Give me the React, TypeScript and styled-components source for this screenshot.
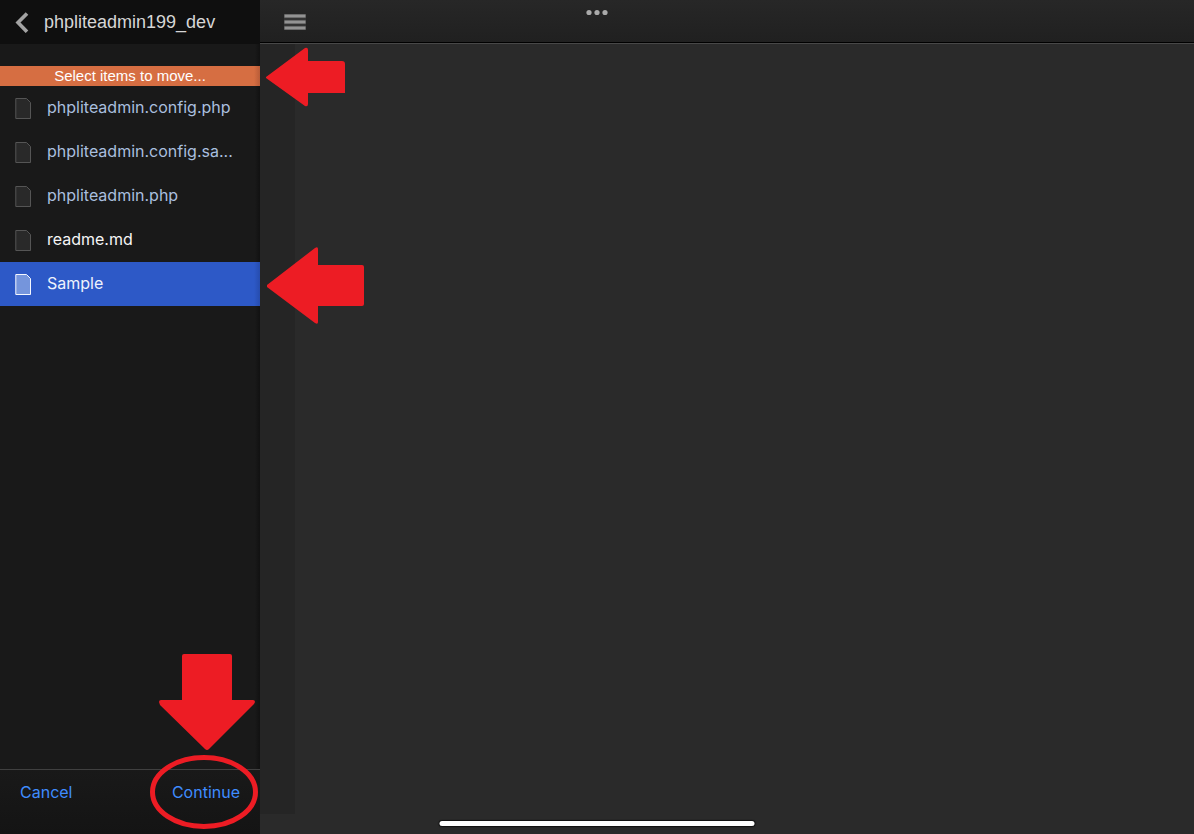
import React from "react";
import styled, { createGlobalStyle } from "styled-components";

const GlobalStyle = createGlobalStyle`
  *, *::before, *::after { box-sizing: border-box; }
  body {
    margin: 0;
    background: #2a2a2a;
    font-family: Inter, Roboto, "Liberation Sans", sans-serif;
    font-size: 16px;
  }
  button { font: inherit; border: 0; padding: 0; background: none; cursor: pointer; }
`;

const Screen = styled.div`
  display: grid;
  grid-template-columns: 260px 1fr;
  min-height: 100vh;
  overflow: hidden;
`;

const Sidebar = styled.aside`
  position: relative;
  z-index: 1;
  display: flex;
  flex-direction: column;
  background: linear-gradient(to left, #111, transparent 5px) #191919;
`;

const SidebarHeader = styled.header`
  display: flex;
  align-items: center;
  gap: 14px;
  height: 44px;
  padding-left: 14px;
  background: #0f0f0f;
`;

const BackButton = styled.button`
  display: flex;
  width: 16px;
  height: 22px;
`;

const Title = styled.h1`
  margin: 0;
  color: #d6d6d6;
  font-family: "Liberation Sans", sans-serif;
  font-size: 18px;
  font-weight: 400;
  line-height: 22px;
`;

const Banner = styled.div`
  position: relative;
  height: 20px;
  margin-top: 22px;
  background: linear-gradient(to left, #b85c38, transparent 6px) #d66e42;
  color: #fff;
  font-family: "Liberation Sans", sans-serif;
  font-size: 15px;
  line-height: 20px;
  text-align: center;
`;

const FileList = styled.ul`
  flex: 1;
  margin: 0;
  padding: 0;
  list-style: none;
`;

const FileItem = styled.li`
  position: relative;
`;

const FileRow = styled.button<{ $selected?: boolean; $tone: string }>`
  display: flex;
  align-items: center;
  gap: 15px;
  width: 100%;
  height: 44px;
  padding-left: 15px;
  color: ${(p) => p.$tone};
  background: ${(p) =>
    p.$selected ? "linear-gradient(to left, #264cae, transparent 6px) #2d59c7" : "none"};
  line-height: 22px;
  text-align: left;
  white-space: nowrap;
`;

const FileName = styled.span`
  padding-bottom: 2px;
`;

const Footer = styled.footer`
  position: relative;
  display: flex;
  justify-content: space-between;
  align-items: flex-start;
  height: 65px;
  padding: 11px 20px;
  border-top: 1px solid #404040;
  background: linear-gradient(#191919, #141414);
`;

const TextButton = styled.button`
  color: #3f8cff;
  line-height: 22px;
`;

const Main = styled.main`
  display: flex;
  flex-direction: column;
  min-width: 0;
`;

const Toolbar = styled.header`
  display: flex;
  align-items: center;
  height: 43px;
  padding: 2px 24px 0;
  background: linear-gradient(#272727, #202020);
  border-bottom: 1px solid #000;
`;

const MenuButton = styled.button`
  display: flex;
`;

const Editor = styled.section`
  flex: 1;
  display: flex;
  border-top: 1px solid #484848;
  background: #2a2a2a;
`;

const Gutter = styled.div`
  width: 35px;
  margin-bottom: 20px;
  background: #252525;
`;

const WindowDots = styled.svg`
  position: absolute;
  z-index: 2;
  top: 9px;
  left: 50%;
  transform: translateX(-50%);
`;

const HomeIndicator = styled.div`
  position: absolute;
  z-index: 2;
  bottom: 8px;
  left: 50%;
  width: 315px;
  height: 5px;
  border-radius: 3px;
  background: #fff;
  box-shadow: 0 0 1px 1px #111;
  transform: translateX(-50%);
`;

const Overlay = styled.svg`
  position: absolute;
  z-index: 3;
  pointer-events: none;
  fill: #ed1c24;
`;

const BannerArrow = styled(Overlay)`
  top: -19px;
  left: 265px;
`;

const RowArrow = styled(Overlay)`
  top: -16px;
  left: 266px;
`;

const DownArrow = styled(Overlay)`
  right: 5px;
  bottom: 83px;
`;

const Ring = styled(Overlay)`
  right: 1px;
  bottom: 4px;
`;

const FileIcon = ({ selected = false }: { selected?: boolean }) => (
  <svg width="17" height="22" viewBox="0 0 17 22" aria-hidden="true">
    <path
      d="M0.8 1.5H11.5L15.5 5.5V21.5H0.8Z"
      fill={selected ? "#7595dc" : "#292929"}
      stroke={selected ? "#f4f7ff" : "#555"}
    />
  </svg>
);

const files = [
  { name: "phpliteadmin.config.php", tone: "#a9bfdf" },
  { name: "phpliteadmin.config.sa...", tone: "#a9bfdf" },
  { name: "phpliteadmin.php", tone: "#a9bfdf" },
  { name: "readme.md", tone: "#f5f5f5" },
  { name: "Sample", tone: "#eef2fc", selected: true },
];

export default function App() {
  return (
    <>
      <GlobalStyle />
      <Screen>
        <Sidebar>
          <SidebarHeader>
            <BackButton aria-label="Back">
              <svg width="16" height="22" viewBox="0 0 16 22">
                <path d="M13 2.4L4 11.6L13 20.8" fill="none" stroke="#a3a3a3" strokeWidth="3.6" />
              </svg>
            </BackButton>
            <Title>phpliteadmin199_dev</Title>
          </SidebarHeader>
          <Banner>
            Select items to move...
            <BannerArrow width="82" height="60" viewBox="0 0 82 60" aria-hidden="true">
              <path d="M1 30L40 1Q43 0 43 3V14H77Q80 14 80 17V46H43V57Q43 60 40 59L1 31Z" />
            </BannerArrow>
          </Banner>
          <FileList>
            {files.map((f) => (
              <FileItem key={f.name}>
                <FileRow $tone={f.tone} $selected={f.selected} aria-pressed={!!f.selected}>
                  <FileIcon selected={f.selected} />
                  <FileName>{f.name}</FileName>
                </FileRow>
                {f.selected && (
                  <RowArrow width="100" height="80" viewBox="0 0 100 80" aria-hidden="true">
                    <path d="M1 39L49 2Q52 0 52 3V19H96Q98 19 98 21V58Q98 60 96 60H52V76Q52 79 49 77L1 41Z" />
                  </RowArrow>
                )}
              </FileItem>
            ))}
          </FileList>
          <Footer>
            <TextButton>Cancel</TextButton>
            <TextButton>Continue</TextButton>
            <DownArrow width="98" height="98" viewBox="0 0 98 98" aria-hidden="true">
              <path d="M25 3Q25 1 27 1H73Q75 1 75 3V47H96Q98 47 98 49L97 51L52 96Q50 98 48 96L3 52L2 49Q2 47 4 47H25Z" />
            </DownArrow>
            <Ring width="110" height="76" viewBox="0 0 110 76" aria-hidden="true">
              <ellipse cx="55" cy="38" rx="51.5" ry="34.5" fill="none" stroke="#ed1c24" strokeWidth="5" />
            </Ring>
          </Footer>
        </Sidebar>
        <Main>
          <Toolbar>
            <MenuButton aria-label="Menu">
              <svg width="22" height="16" viewBox="0 0 22 16">
                <path d="M0 0H22V4H0ZM0 6H22V10H0ZM0 12H22V16H0Z" fill="#939393" stroke="#444" strokeWidth="1" />
              </svg>
            </MenuButton>
          </Toolbar>
          <Editor>
            <Gutter />
          </Editor>
        </Main>
      </Screen>
      <WindowDots width="22" height="7" viewBox="0 0 22 7" aria-hidden="true">
        <circle cx="3" cy="3.5" r="2.6" fill="#aaa" />
        <circle cx="11" cy="3.5" r="2.6" fill="#aaa" />
        <circle cx="19" cy="3.5" r="2.6" fill="#aaa" />
      </WindowDots>
      <HomeIndicator />
    </>
  );
}
